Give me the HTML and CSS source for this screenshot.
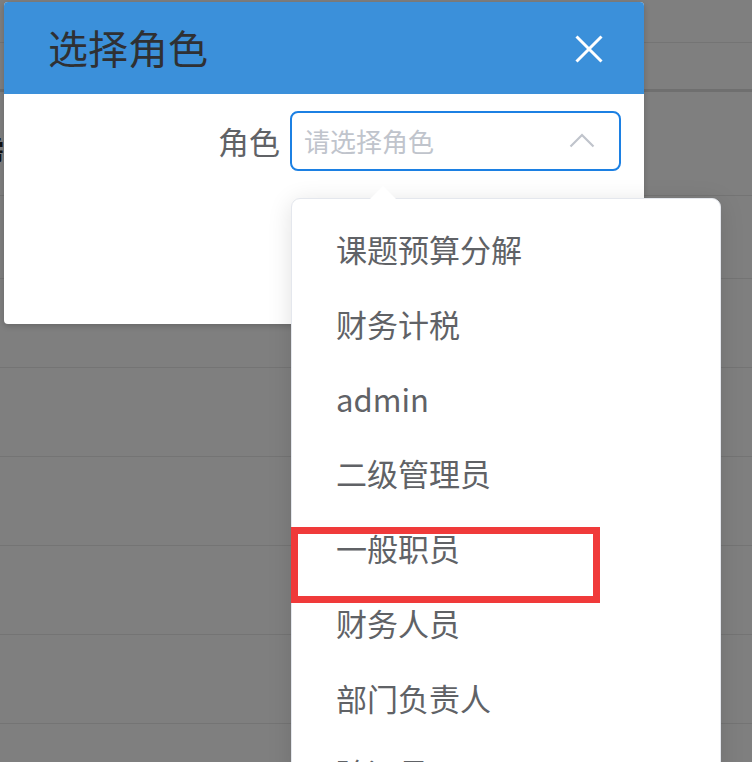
FILE: index.html
```html
<!DOCTYPE html>
<html lang="zh-CN">
<head>
    <meta charset="UTF-8">
    <meta name="viewport" content="width=device-width, initial-scale=1.0">
    <title>选择角色</title>
    <link rel="stylesheet" href="styles.css">
</head>
<body>
    <!-- page behind the modal mask -->
    <div class="page">
        <div class="bg-row bg-top"></div>
        <div class="bg-row bg-head"></div>
        <div class="bg-row bg-title"><span class="cut-text">需</span></div>
        <div class="bg-row bg-short"></div>
        <div class="bg-row"></div>
        <div class="bg-row"></div>
        <div class="bg-row"></div>
        <div class="bg-row"></div>
        <div class="bg-row"></div>
    </div>

    <div class="dialog">
        <div class="dialog-header">
            <span class="dialog-title">选择角色</span>
            <button class="dialog-close" type="button" aria-label="关闭">
                <svg width="28" height="28" viewBox="0 0 28 28">
                    <path d="M1.5 1.5 L26.5 26.5 M26.5 1.5 L1.5 26.5" stroke="#fff" stroke-width="3" fill="none"/>
                </svg>
            </button>
        </div>
        <div class="dialog-body">
            <div class="form-row">
                <label class="form-label">角色</label>
                <div class="select">
                    <span class="select-placeholder">请选择角色</span>
                    <svg class="select-arrow" width="26" height="16" viewBox="0 0 26 16">
                        <path d="M1.5 14.5 L13 3 L24.5 14.5" stroke="#c0c4cc" stroke-width="2.2" fill="none"/>
                    </svg>
                </div>
            </div>
        </div>
    </div>

    <div class="dropdown">
        <span class="dropdown-arrow"></span>
        <ul class="dropdown-list">
            <li>课题预算分解</li>
            <li>财务计税</li>
            <li>admin</li>
            <li>二级管理员</li>
            <li>一般职员</li>
            <li>财务人员</li>
            <li>部门负责人</li>
            <li>验证员</li>
        </ul>
    </div>

    <!-- annotation box -->
    <div class="mark"></div>
</body>
</html>
```

FILE: styles.css
```css
body {
    margin: 0;
    padding: 0;
    width: 752px;
    height: 762px;
    overflow: hidden;
    background: #7f7f7f;
    font-family: "Noto Sans CJK SC", "Noto Sans", sans-serif;
    position: relative;
}

.page {
    display: flex;
    flex-direction: column;
}

.bg-row {
    height: 88px;
    border-bottom: 1px solid #747474;
    flex-shrink: 0;
}

.bg-top {
    height: 42px;
}

.bg-head {
    height: 46px;
    border-bottom: 3px solid #6f6f6f;
}

.bg-title {
    height: 103px;
    position: relative;
}

.cut-text {
    position: absolute;
    left: -22px;
    top: 38px;
    font-size: 26px;
    font-weight: bold;
    color: #111;
}

.bg-short {
    height: 82px;
}

.dialog {
    position: absolute;
    left: 4px;
    top: 2px;
    width: 640px;
    height: 322px;
    background: #fff;
    border-radius: 4px;
    overflow: hidden;
    box-shadow: 0 2px 6px rgba(0, 0, 0, 0.2);
}

.dialog-header {
    height: 92px;
    background: #3b90da;
    display: flex;
    align-items: center;
    justify-content: space-between;
    padding: 0 41px 0 44px;
}

.dialog-title {
    font-size: 40px;
    color: #2f3033;
    line-height: 1;
    margin-top: -2px;
}

.dialog-close {
    border: none;
    background: none;
    padding: 0;
    width: 28px;
    height: 28px;
    display: block;
    margin-top: 2px;
}

.dialog-close svg {
    display: block;
}

.dialog-body {
    padding-top: 17px;
}

.form-row {
    display: flex;
    align-items: center;
}

.form-label {
    width: 276px;
    padding-right: 10px;
    text-align: right;
    font-size: 31px;
    color: #606266;
    line-height: 60px;
}

.select {
    width: 331px;
    height: 60px;
    box-sizing: border-box;
    border: 2px solid #1c80e3;
    border-radius: 8px;
    display: flex;
    align-items: center;
    justify-content: space-between;
    padding: 0 24px 0 12px;
}

.select-placeholder {
    font-size: 26px;
    color: #c0c4cc;
    line-height: 1;
}

.select-arrow {
    display: block;
    margin-top: -2px;
}

.dropdown {
    position: absolute;
    left: 291px;
    top: 198px;
    bottom: -20px;
    width: 430px;
    box-sizing: border-box;
    background: #fff;
    border: 1px solid #e4e7ed;
    border-radius: 9px;
    box-shadow: 0 4px 24px rgba(0, 0, 0, 0.12);
}

.dropdown-arrow {
    position: absolute;
    left: 78px;
    top: -13px;
    width: 0;
    height: 0;
    border-left: 13px solid transparent;
    border-right: 13px solid transparent;
    border-bottom: 13px solid #fff;
}

.dropdown-list {
    list-style: none;
    margin: 0;
    padding: 13px 0 0;
}

.dropdown-list li {
    height: 74.8px;
    line-height: 74.8px;
    padding: 0 44px;
    font-size: 31px;
    color: #606266;
    white-space: nowrap;
}

.mark {
    position: absolute;
    left: 291px;
    top: 527px;
    width: 309px;
    height: 76px;
    box-sizing: border-box;
    border: 7px solid #f03a3a;
}
```
